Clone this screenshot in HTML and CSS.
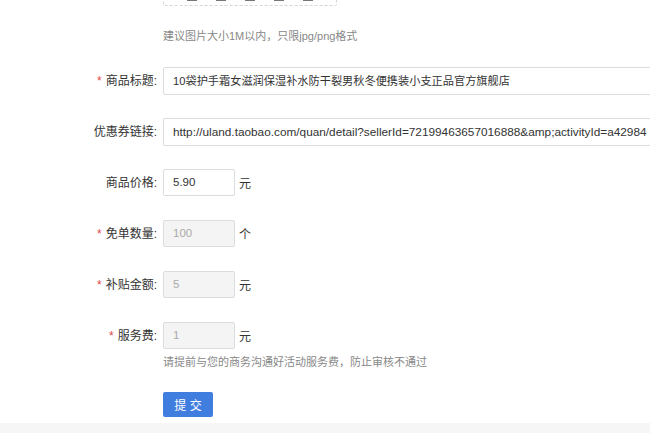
FILE: index.html
```html
<!DOCTYPE html>
<html lang="zh">
<head>
<meta charset="utf-8">
<link rel="stylesheet" href="styles.css">
</head>
<body>
<div class="page">
  <div class="form">
    <div class="row upload-row">
      <div class="label"></div>
      <div class="field">
        <div class="upload"><span class="mark"></span><span class="mark"></span><span class="mark"></span><span class="mark"></span><span class="mark"></span></div>
        <div class="hint">建议图片大小1M以内，只限jpg/png格式</div>
      </div>
    </div>
    <div class="row">
      <div class="label"><span class="req">*</span>商品标题:</div>
      <div class="field"><div class="input wide title">10袋护手霜女滋润保湿补水防干裂男秋冬便携装小支正品官方旗舰店</div></div>
    </div>
    <div class="row">
      <div class="label">优惠券链接:</div>
      <div class="field"><div class="input wide link">http://uland.taobao.com/quan/detail?sellerId=72199463657016888&amp;amp;activityId=a42984</div></div>
    </div>
    <div class="row">
      <div class="label">商品价格:</div>
      <div class="field"><div class="line"><div class="input short">5.90</div><span class="unit">元</span></div></div>
    </div>
    <div class="row">
      <div class="label"><span class="req">*</span>免单数量:</div>
      <div class="field"><div class="line"><div class="input short disabled">100</div><span class="unit">个</span></div></div>
    </div>
    <div class="row">
      <div class="label"><span class="req">*</span>补贴金额:</div>
      <div class="field"><div class="line"><div class="input short disabled">5</div><span class="unit">元</span></div></div>
    </div>
    <div class="row">
      <div class="label"><span class="req">*</span>服务费:</div>
      <div class="field">
        <div class="line"><div class="input short disabled">1</div><span class="unit">元</span></div>
        <div class="hint tip">请提前与您的商务沟通好活动服务费，防止审核不通过</div>
      </div>
    </div>
    <div class="row submit-row">
      <div class="label"></div>
      <div class="field"><button class="btn">提 交</button></div>
    </div>
  </div>
  <div class="footer"></div>
</div>
</body>
</html>
```

FILE: styles.css
```css
html, body {
  margin: 0;
  padding: 0;
  background: #fff;
  overflow: hidden;
}
body {
  font-family: "Liberation Sans", "Noto Sans CJK SC", sans-serif;
  font-size: 12px;
  color: #333;
  width: 650px;
  height: 433px;
}
.page {
  display: flex;
  flex-direction: column;
  height: 433px;
}
.form {
  flex: 1;
  display: flex;
  flex-direction: column;
}
.row {
  display: flex;
  align-items: flex-start;
  margin-top: 23px;
}
.label {
  width: 157px;
  flex: none;
  text-align: right;
  height: 28px;
  line-height: 28px;
  white-space: nowrap;
  color: #333;
  font-size: 12px;
}
.req {
  color: #e5484d;
  margin-right: 4px;
}
.field {
  flex: none;
  display: flex;
  flex-direction: column;
  margin-left: 6px;
}
.upload-row {
  margin-top: -20px;
}
.upload-row .label {
  height: 0;
}
.upload {
  height: 26px;
  border: 1px dashed #d6d6d6;
  border-radius: 2px;
  display: flex;
  align-items: flex-end;
  justify-content: space-around;
  padding: 0 14px 4px;
  box-sizing: border-box;
  width: 174px;
}
.mark {
  width: 10px;
  height: 2px;
  background: #777;
}
.hint {
  color: #888;
  font-size: 11px;
  margin-top: 22px;
  line-height: 16px;
}
.input {
  height: 28px;
  line-height: 26px;
  border: 1px solid #dcdcdc;
  border-radius: 2px;
  box-sizing: border-box;
  padding: 0 9px;
  white-space: nowrap;
  overflow: hidden;
  font-size: 11.5px;
  color: #333;
}
.wide {
  width: 500px;
}
.title {
  font-size: 11.2px;
}
.link {
  font-size: 11.8px;
}
.line {
  display: flex;
  align-items: center;
}
.short {
  width: 72px;
  height: 27px;
  line-height: 25px;
}
.disabled {
  background: #f4f4f4;
  color: #aaa;
}
.unit {
  margin-left: 4px;
  color: #333;
}
.tip {
  margin-top: 5px;
}
.submit-row {
  margin-top: 22px;
}
.btn {
  width: 50px;
  height: 25px;
  border: none;
  border-radius: 2px;
  background: #3f7ddf;
  color: #fff;
  font-family: inherit;
  font-size: 12px;
  padding: 0;
  cursor: pointer;
}
.footer {
  height: 10px;
  background: #f6f6f6;
  flex: none;
}
```
